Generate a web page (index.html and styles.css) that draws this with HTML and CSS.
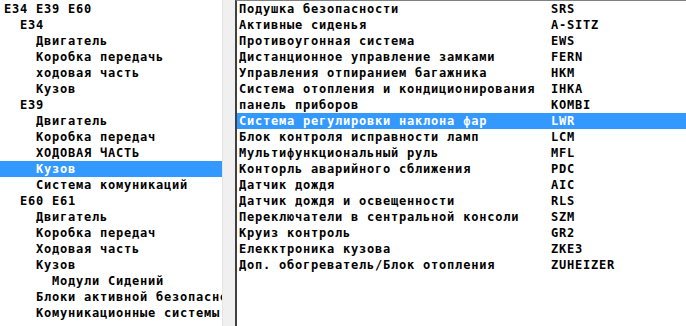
FILE: index.html
```html
<!DOCTYPE html>
<html lang="ru">
<head>
    <meta charset="utf-8">
    <title>Модули</title>
    <link rel="stylesheet" href="styles.css">
</head>
<body>
<div class="window">
    <div class="tree">
        <div class="node lvl0">E34 E39 E60</div>
        <div class="node lvl1">E34</div>
        <div class="node lvl2">Двигатель</div>
        <div class="node lvl2">Коробка передачь</div>
        <div class="node lvl2">ходовая часть</div>
        <div class="node lvl2">Кузов</div>
        <div class="node lvl1">E39</div>
        <div class="node lvl2">Двигатель</div>
        <div class="node lvl2">Коробка передач</div>
        <div class="node lvl2">ХОДОВАЯ ЧАСТЬ</div>
        <div class="node lvl2 selected">Кузов</div>
        <div class="node lvl2">Система комуникаций</div>
        <div class="node lvl1">E60 E61</div>
        <div class="node lvl2">Двигатель</div>
        <div class="node lvl2">Коробка передач</div>
        <div class="node lvl2">Ходовая часть</div>
        <div class="node lvl2">Кузов</div>
        <div class="node lvl3">Модули Сидений</div>
        <div class="node lvl2">Блоки активной безопасности</div>
        <div class="node lvl2">Комуникационные системы</div>
    </div>
    <div class="splitter"></div>
    <div class="list">
        <div class="row"><span class="name">Подушка безопасности</span><span class="code">SRS</span></div>
        <div class="row"><span class="name">Активные сиденья</span><span class="code">A-SITZ</span></div>
        <div class="row"><span class="name">Противоугонная система</span><span class="code">EWS</span></div>
        <div class="row"><span class="name">Дистанционное управление замками</span><span class="code">FERN</span></div>
        <div class="row"><span class="name">Управления отпиранием багажника</span><span class="code">HKM</span></div>
        <div class="row"><span class="name">Система отопления и кондиционирования</span><span class="code">IHKA</span></div>
        <div class="row"><span class="name">панель приборов</span><span class="code">KOMBI</span></div>
        <div class="row selected"><span class="name">Система регулировки наклона фар</span><span class="code">LWR</span></div>
        <div class="row"><span class="name">Блок контроля исправности ламп</span><span class="code">LCM</span></div>
        <div class="row"><span class="name">Мультифункциональный руль</span><span class="code">MFL</span></div>
        <div class="row"><span class="name">Конторль аварийного сближения</span><span class="code">PDC</span></div>
        <div class="row"><span class="name">Датчик дождя</span><span class="code">AIC</span></div>
        <div class="row"><span class="name">Датчик дождя и освещенности</span><span class="code">RLS</span></div>
        <div class="row"><span class="name">Переключатели в сентральной консоли</span><span class="code">SZM</span></div>
        <div class="row"><span class="name">Круиз контроль</span><span class="code">GR2</span></div>
        <div class="row"><span class="name">Елекктроника кузова</span><span class="code">ZKE3</span></div>
        <div class="row"><span class="name">Доп. обогреватель/Блок отопления</span><span class="code">ZUHEIZER</span></div>
    </div>
</div>
</body>
</html>
```

FILE: styles.css
```css
/* Window layout */
body {
    margin: 0;
    background: #ffffff;
}
.window {
    display: flex;
    height: 326px;
    overflow: hidden;
    font-family: "DejaVu Sans Mono", "Liberation Mono", monospace;
    font-weight: bold;
    font-size: 12px;
    letter-spacing: 0.78px;
    color: #000;
}

/* Tree pane */
.tree {
    width: 222px;
    flex: none;
    padding-top: 1px;
    background: #fff;
    overflow: hidden;
}
.node {
    height: 16px;
    line-height: 16px;
    white-space: pre;
    overflow: hidden;
}
.lvl0 { padding-left: 4px; }
.lvl1 { padding-left: 20px; }
.lvl2 { padding-left: 36px; }
.lvl3 { padding-left: 52px; }

/* Splitter between panes */
.splitter {
    width: 12px;
    flex: none;
    background: #f0f0f0;
    border-left: 1px solid #e3e3e3;
}

/* Module list */
.list {
    flex: 1;
    border-left: 2px solid #404040;
    border-top: 1px solid #808080;
    background: #fff;
}
.row {
    display: flex;
    height: 16px;
    line-height: 16px;
    padding-left: 2px;
    white-space: pre;
}
.name {
    width: 312px;
    flex: none;
    overflow: hidden;
}
.selected {
    background: #3399ff;
    color: #fff;
}
```
